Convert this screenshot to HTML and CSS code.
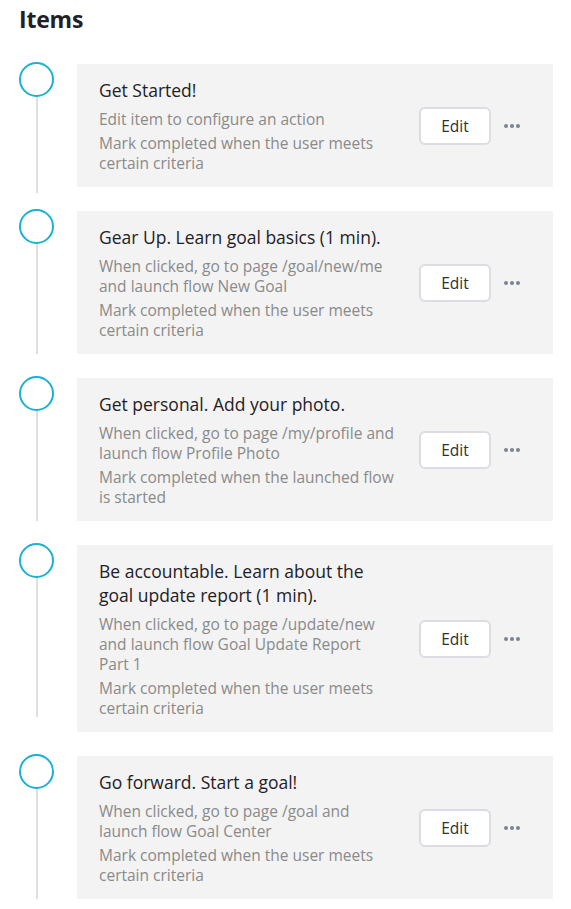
FILE: index.html
```html
<!DOCTYPE html>
<html>
<head>
<meta charset="utf-8">
<link rel="stylesheet" href="styles.css">
</head>
<body>
<div class="page">
  <h1 class="heading">Items</h1>
  <div class="list">
    <div class="item item-first">
      <div class="rail"><div class="dot"></div><div class="line"></div></div>
      <div class="card">
        <div class="text">
          <div class="title">Get Started!</div>
          <p class="desc">Edit item to configure an action</p>
          <p class="desc">Mark completed when the user meets<br>certain criteria</p>
        </div>
        <button class="edit">Edit</button>
        <div class="more"><span></span><span></span><span></span></div>
      </div>
    </div>
    <div class="item">
      <div class="rail"><div class="dot"></div><div class="line"></div></div>
      <div class="card">
        <div class="text">
          <div class="title">Gear Up. Learn goal basics (1 min).</div>
          <p class="desc">When clicked, go to page /goal/new/me<br>and launch flow New Goal</p>
          <p class="desc">Mark completed when the user meets<br>certain criteria</p>
        </div>
        <button class="edit">Edit</button>
        <div class="more"><span></span><span></span><span></span></div>
      </div>
    </div>
    <div class="item">
      <div class="rail"><div class="dot"></div><div class="line"></div></div>
      <div class="card">
        <div class="text">
          <div class="title">Get personal. Add your photo.</div>
          <p class="desc">When clicked, go to page /my/profile and<br>launch flow Profile Photo</p>
          <p class="desc">Mark completed when the launched flow<br>is started</p>
        </div>
        <button class="edit">Edit</button>
        <div class="more"><span></span><span></span><span></span></div>
      </div>
    </div>
    <div class="item item-tall">
      <div class="rail"><div class="dot"></div><div class="line"></div></div>
      <div class="card">
        <div class="text">
          <div class="title">Be accountable. Learn about the<br>goal update report (1 min).</div>
          <p class="desc">When clicked, go to page /update/new<br>and launch flow Goal Update Report<br>Part 1</p>
          <p class="desc">Mark completed when the user meets<br>certain criteria</p>
        </div>
        <button class="edit">Edit</button>
        <div class="more"><span></span><span></span><span></span></div>
      </div>
    </div>
    <div class="item">
      <div class="rail"><div class="dot"></div><div class="line"></div></div>
      <div class="card">
        <div class="text">
          <div class="title">Go forward. Start a goal!</div>
          <p class="desc">When clicked, go to page /goal and<br>launch flow Goal Center</p>
          <p class="desc">Mark completed when the user meets<br>certain criteria</p>
        </div>
        <button class="edit">Edit</button>
        <div class="more"><span></span><span></span><span></span></div>
      </div>
    </div>
  </div>
</div>
</body>
</html>
```
FILE: styles.css
```css
html, body {
  margin: 0;
  padding: 0;
  background: #ffffff;
}
body {
  font-family: "Open Sans", Lato, "Liberation Sans", sans-serif;
  color: #1f2126;
}
.page {
  padding: 2px 18px 0 19px;
}
.heading {
  margin: 0;
  font-size: 23px;
  line-height: 34px;
  font-weight: 700;
  color: #1e2228;
  letter-spacing: -0.2px;
}
.list {
  margin-top: 28px;
  display: flex;
  flex-direction: column;
  gap: 24px;
}
.item {
  display: flex;
  align-items: stretch;
}
.rail {
  width: 58px;
  flex: none;
  display: flex;
  flex-direction: column;
  margin-top: -2px;
}
.dot {
  width: 31px;
  height: 31px;
  border: 2px solid #1cb0d2;
  border-radius: 50%;
  flex: none;
}
.line {
  flex: 1;
  width: 2px;
  margin-left: 17px;
  background: #dedede;
}
.item-first .line {
  margin-bottom: -6px;
}
.item-tall .line {
  margin-bottom: 15px;
}
.card {
  flex: 1;
  background: #f3f3f3;
  display: flex;
  align-items: center;
  padding: 14px 34px 14px 22px;
  min-width: 0;
}
.text {
  width: 305px;
  flex: none;
  white-space: nowrap;
}
.title {
  font-size: 17.5px;
  line-height: 24px;
  color: #1f2126;
  margin-bottom: 7px;
}
.desc {
  margin: 0;
  font-size: 15.5px;
  line-height: 20px;
  color: #8a8a8a;
}
.desc + .desc {
  margin-top: 4px;
}
.edit {
  margin-left: 15px;
  width: 72px;
  height: 38px;
  flex: none;
  background: #ffffff;
  border: 2px solid #dcdce2;
  border-radius: 6px;
  font-family: inherit;
  font-size: 15.5px;
  color: #2e3035;
  padding: 0;
}
.more {
  margin-left: 13px;
  display: flex;
  gap: 2px;
}
.more span {
  width: 4px;
  height: 4px;
  border-radius: 50%;
  background: #7c8293;
}
```
